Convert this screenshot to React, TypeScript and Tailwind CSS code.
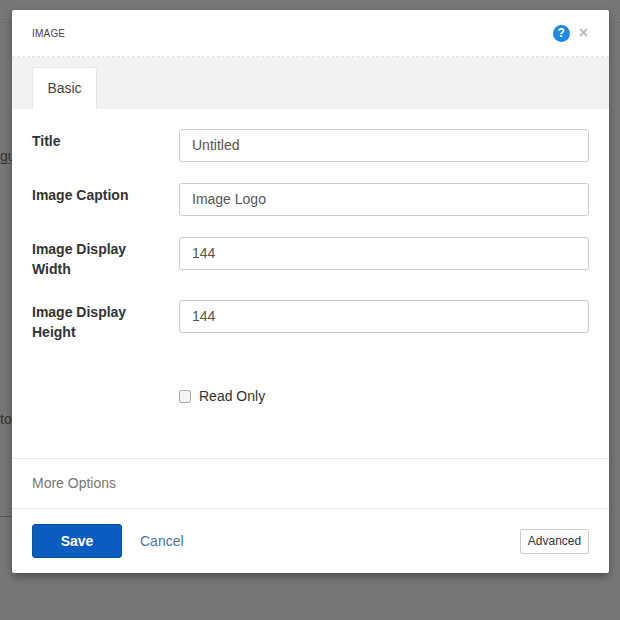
export default function App() {
  const rows = [
    { label: ["Title"], value: "Untitled", mt: "mt-0" },
    { label: ["Image Caption"], value: "Image Logo", mt: "mt-[21px]" },
    { label: ["Image Display", "Width"], value: "144", mt: "mt-[21px]" },
    { label: ["Image Display", "Height"], value: "144", mt: "mt-[21px]" },
  ];
  return (
    <div className="w-[620px] h-[620px] bg-[#777777] relative overflow-hidden" style={{ fontFamily: "'Liberation Sans', Arial, sans-serif" }}>
      <div className="absolute left-0 top-[163px] w-[12px] border-t border-[#555]" />
      <div className="absolute left-0 top-[146px] text-[14px] text-[#333]">gu</div>
      <div className="absolute left-0 top-[409px] text-[14px] text-[#333]">to</div>
      <div className="absolute left-0 top-[516px] w-[12px] border-t border-[#555]" />
      <div className="absolute left-0 top-[22px] w-full border-t border-[#6e6e6e]" />
      <div className="absolute left-[12px] top-[10px] w-[597px] h-[563px] bg-white rounded-[2px] shadow-[0_4px_8px_rgba(0,0,0,0.35)] flex flex-col">
        <div className="h-[47px] flex items-center justify-between px-[20px] border-b border-dashed border-[#e2e2e2]">
          <span className="text-[10px] text-[#444] tracking-[0.2px]">IMAGE</span>
          <div className="flex items-center gap-[9px] pr-[1px]">
            <div className="w-[17px] h-[17px] rounded-full bg-[#1e88e5] text-white text-[12px] font-bold flex items-center justify-center">?</div>
            <span className="text-[#bbb] text-[16px] leading-none font-bold">×</span>
          </div>
        </div>
        <div className="h-[52px] bg-[#f2f2f2] px-[20px] flex items-end">
          <div className="w-[65px] h-[42px] bg-white border border-b-0 border-[#e6e6e6] rounded-t-[3px] flex items-center justify-center text-[14px] text-[#444]">Basic</div>
        </div>
        <div className="flex-1 px-[20px] pt-[20px]">
          {rows.map((r, i) => (
            <div key={i} className={`flex ${r.mt}`}>
              <div className="w-[147px] pt-[2px] text-[14px] font-bold text-[#333] leading-[20px]">
                {r.label.map((l) => (<div key={l}>{l}</div>))}
              </div>
              <div className="flex-1 h-[33px] border border-[#ccc] rounded-[3px] flex items-center px-[12px] text-[14px] text-[#555]">{r.value}</div>
            </div>
          ))}
          <div className="flex items-center ml-[147px] mt-[44px] gap-[8px]">
            <div className="w-[12px] h-[13px] border border-[#aaa] rounded-[2px] bg-[#f3f3f3]" />
            <span className="text-[14px] text-[#333]">Read Only</span>
          </div>
        </div>
        <div className="h-[51px] border-t border-b border-[#e8e8e8] flex items-center px-[20px] text-[14px] text-[#777] mb-[0px]">More Options</div>
        <div className="h-[64px] flex items-center justify-between px-[20px]">
          <div className="flex items-center gap-[18px]">
            <div className="w-[90px] h-[34px] bg-[#0b5cbf] border border-[#0a4fa3] rounded-[3px] text-white text-[14px] font-bold flex items-center justify-center">Save</div>
            <span className="text-[14px] text-[#4a74a8]">Cancel</span>
          </div>
          <div className="w-[69px] h-[25px] border border-[#ccc] rounded-[2px] text-[12px] text-[#333] flex items-center justify-center">Advanced</div>
        </div>
      </div>
    </div>
  );
}
